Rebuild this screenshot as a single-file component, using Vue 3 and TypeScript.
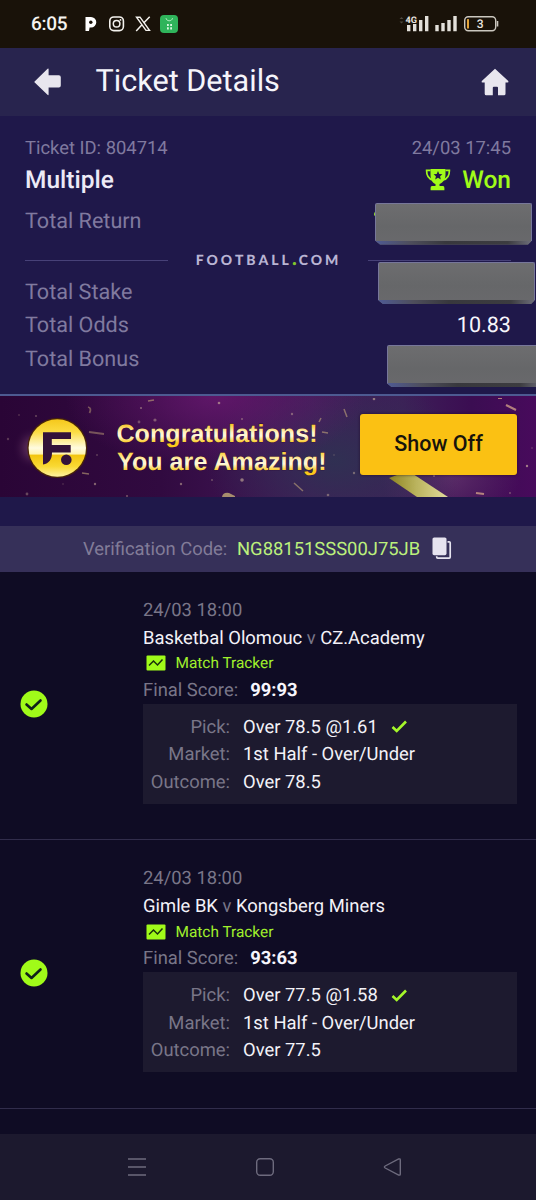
<script setup lang="ts">
interface Match {
  time: string
  home: string
  away: string
  score: string
  pick: string
  market: string
  outcome: string
}

const matches: Match[] = [
  {
    time: '24/03 18:00',
    home: 'Basketbal Olomouc',
    away: 'CZ.Academy',
    score: '99:93',
    pick: 'Over 78.5 @1.61',
    market: '1st Half - Over/Under',
    outcome: 'Over 78.5',
  },
  {
    time: '24/03 18:00',
    home: 'Gimle BK',
    away: 'Kongsberg Miners',
    score: '93:63',
    pick: 'Over 77.5 @1.58',
    market: '1st Half - Over/Under',
    outcome: 'Over 77.5',
  },
]

// x, y, radius, opacity of the small confetti specks
const specks: number[][] = [
  [19, 17, 1, 0.3], [36, 18, 1, 0.5], [141, 10, 1, 0.7], [219, 5, 1.3, 0.8], [242, 21, 1, 0.6],
  [139, 24, 1.4, 0.5], [155, 22, 1.6, 0.6], [8, 41, 1.2, 0.4], [97, 57, 1, 0.4], [95, 86, 1.2, 0.7],
  [181, 86, 1.2, 0.7], [212, 82, 1, 0.5], [242, 82, 1.8, 0.8], [63, 86, 0.8, 0.4], [27, 96, 1.4, 0.5],
  [127, 98, 1, 0.6], [374, 1, 1.3, 0.8], [292, 16, 1.2, 0.6], [354, 75, 1.2, 0.6], [434, 78, 1, 0.6],
  [527, 68, 1.2, 0.9], [510, 95, 1, 0.5], [532, 50, 0.8, 0.5], [328, 97, 1.3, 0.6], [334, 57, 0.8, 0.4],
]
</script>

<template>
  <div class="screen">
    <div class="status">
      <span class="clock">6:05</span>
      <svg class="status-icons" width="110" height="24" viewBox="0 0 110 24">
        <path d="M6.500 5h5.500a5 5 0 0 1 0 10.600h-1.400l-.6 3.400H6.500z" fill="#fff" />
        <circle cx="11.800" cy="10.300" r="1.700" fill="#191209" />
        <rect x="30.800" y="5" width="13.600" height="13.600" rx="4" fill="none" stroke="#f4f2ee" stroke-width="1.600" />
        <circle cx="37.600" cy="11.800" r="3.300" fill="none" stroke="#f4f2ee" stroke-width="1.500" />
        <circle cx="41.500" cy="7.900" r="0.900" fill="#f4f2ee" />
        <path d="M57.500 5.200H61l9.500 13.200H67z" fill="none" stroke="#f4f2ee" stroke-width="1.400" />
        <path d="M70.700 4.700l-6 6.400M63 12.700l-5.800 6.200" stroke="#f4f2ee" stroke-width="1.500" />
        <rect x="81" y="3" width="18" height="18" rx="4" fill="#2fb45b" />
        <path d="M87 6.200c.6 3.400 5.900 3.400 6.500 0" fill="none" stroke="#b9f0c8" stroke-width="1" />
        <path d="M88 13h1.800M91.200 13H93M88 16.300h1.800M91.200 16.300H93" stroke="#d8f7e0" stroke-width="2.200" />
      </svg>
      <svg class="signal" width="102" height="24" viewBox="0 0 102 24">
        <path d="M1.500 7l2-2 2 2zM1.500 9.500l2 2 2-2z" fill="#4b463e" />
        <text x="7.500" y="10.700" class="net" textLength="11.500" lengthAdjust="spacingAndGlyphs">4G</text>
        <path d="M9 13h3.400v6.300H9zM15 12h3.400v7.300H15zM21 8h3.400v11.300H21zM27 4h3.400v15.300H27zM37.300 13h3.400v6.300h-3.400zM43.300 11h3.400v8.300h-3.400zM49.300 8h3.400v11.300h-3.400zM55.300 4h3.400v15.300h-3.400z" fill="#e3e0da" />
        <rect x="66.700" y="4.700" width="31" height="14" rx="3.600" fill="none" stroke="#cbc7bf" stroke-width="1.400" />
        <path d="M99.500 9v5.500" stroke="#cbc7bf" stroke-width="1.600" />
        <rect x="69" y="7" width="2" height="9.500" rx="0.500" fill="#e2a33a" />
        <text x="78.700" y="16" class="charge">3</text>
      </svg>
    </div>

    <header class="header">
      <svg class="back" width="30" height="28" viewBox="0 0 30 28">
        <path d="M1.600 13.500L14.600.8q1-.9 1 .5v6h10.200q2 0 2 2v8.200q0 2-2 2H15.600v6.700q0 1.600-1.100.5L1.700 14.600q-.7-.6-.1-1.100z" fill="#e8e6ee" />
      </svg>
      <h1 class="title">Ticket Details</h1>
      <svg class="home" width="28" height="28" viewBox="0 0 28 28">
        <path d="M14 .8L27.300 13q.7 1.500-.9 1.600h-1.900v11.200q0 1.500-1.500 1.500h-6v-7.500q0-1-1-1h-3.200q-1 0-1 1v7.500H5.200q-1.500 0-1.500-1.500V14.600H1.500Q.1 14.500.8 13z" fill="#e8e6ee" />
      </svg>
    </header>

    <section class="summary">
      <div class="row id-row"><span>Ticket ID: 804714</span><span>24/03 17:45</span></div>
      <div class="row type-row">
        <span class="multi">Multiple</span>
        <span class="won">
          <svg width="26" height="23" viewBox="0 0 26 23">
            <path d="M5.500 1h15v5.500c0 5-2.700 8.300-6 9.600V18h3.500q1.400 0 1.400 2v2.200H5.600V20q0-2 1.400-2h3.500v-1.900c-3.300-1.300-5-4.600-5-9.600z" fill="#a0fb19" />
            <path d="M5.500 2.400H1.600C1.500 7.500 4.300 11 8 12M20.500 2.400h3.900C24.500 7.500 21.700 11 18 12" fill="none" stroke="#a0fb19" stroke-width="1.700" />
            <path d="M13 3l1.300 2.900 3.100.3-2.300 2.100.7 3.200-2.800-1.700-2.800 1.700.7-3.200-2.300-2.100 3.100-.3z" fill="#1f184a" />
          </svg>
          <b>Won</b>
        </span>
      </div>
      <div class="row return-row"><span>Total Return</span><i class="dot"></i><i class="mask mask-return"></i></div>
      <div class="divider"><hr /><span class="brand">FOOTBALL<em>.</em>COM</span><hr /></div>
      <div class="row stake-row"><span>Total Stake</span><i class="mask mask-stake"></i></div>
      <div class="row odds-row"><span>Total Odds</span><span class="odds">10.83</span></div>
      <div class="row bonus-row"><span>Total Bonus</span><i class="mask mask-bonus"></i></div>
    </section>

    <section class="banner">
      <svg class="confetti" width="536" height="99" viewBox="0 0 536 99">
        <defs>
          <linearGradient id="gold" x1="0" y1="0" x2="0" y2="1">
            <stop offset="0" stop-color="#f5c81c" />
            <stop offset="0.220" stop-color="#fbdc42" />
            <stop offset="0.500" stop-color="#fffbe0" />
            <stop offset="0.600" stop-color="#fff4b0" />
            <stop offset="0.630" stop-color="#f3c50f" />
            <stop offset="0.820" stop-color="#f9d934" />
            <stop offset="1" stop-color="#fff3a0" />
          </linearGradient>
          <linearGradient id="ribbon" x1="0" y1="0" x2="1" y2="0">
            <stop offset="0" stop-color="#8f8420" />
            <stop offset="0.450" stop-color="#b9b25c" />
            <stop offset="1" stop-color="#e2dc9c" />
          </linearGradient>
          <linearGradient id="lineOne" gradientUnits="userSpaceOnUse" x1="0" y1="26" x2="0" y2="50">
            <stop offset="0" stop-color="#f8c51e" />
            <stop offset="0.350" stop-color="#fff3c4" />
            <stop offset="0.500" stop-color="#fff8dc" />
            <stop offset="0.780" stop-color="#fbc91b" />
          </linearGradient>
          <linearGradient id="lineTwo" gradientUnits="userSpaceOnUse" x1="0" y1="54" x2="0" y2="78">
            <stop offset="0" stop-color="#fbd135" />
            <stop offset="0.350" stop-color="#fff3c4" />
            <stop offset="0.500" stop-color="#fff8dc" />
            <stop offset="0.780" stop-color="#fbc91b" />
          </linearGradient>
          <filter id="soft" x="-20%" y="-20%" width="140%" height="140%"><feGaussianBlur stdDeviation="0.700" /></filter>
          <filter id="glow" x="-60%" y="-60%" width="220%" height="220%"><feGaussianBlur stdDeviation="5" /></filter>
        </defs>
        <ellipse cx="32" cy="50" rx="10" ry="12" fill="#b77a9a" opacity="0.350" filter="url(#glow)" />
        <circle cx="57.300" cy="50" r="30" fill="#4a2608" />
        <circle cx="57.300" cy="50" r="28.700" fill="url(#gold)" />
        <path d="M43 34.300h28v6.700H51.800v6H70.700v7.500H52c0 7-3 11-9 12z" fill="#33123a" />
        <circle cx="66.300" cy="61.800" r="5.300" fill="#33123a" />
        <g filter="url(#soft)" opacity="0.700">
          <path d="M88 9q4 1 1.500 6M89 34l15 2" stroke="#c0a376" stroke-width="1.800" fill="none" opacity="0.700" />
          <path d="M148 3l6-1M82 75l7 1M322 34l6 1M344 11l3 8M319 24l2-4M294 85l9 8" stroke="#c9ad7c" stroke-width="1.500" opacity="0.800" fill="none" />
          <path d="M506 7l10 5M498 0h4M476 95l8 1" stroke="#e0b08c" stroke-width="2.200" />
          <path d="M222 99q1-5 7-4l6 3v1z" fill="#d7c27b" />
          <circle v-for="(s, i) in specks" :key="i" :cx="s[0]" :cy="s[1]" :r="s[2]" :opacity="s[3]" fill="#d8bfa2" />
        </g>
        <path d="M389 80l16-6h5l38 25h-31z" fill="url(#ribbon)" filter="url(#soft)" />
        <text x="116.500" y="44" class="congrats" fill="url(#lineOne)" textLength="201">Congratulations!</text>
        <text x="117" y="72" class="congrats" fill="url(#lineTwo)" textLength="209.500">You are Amazing!</text>
      </svg>
      <button class="show-off">Show Off</button>
    </section>

    <section class="verify">
      <span class="vlabel">Verification Code:</span>
      <span class="vcode">NG88151SSS00J75JB</span>
      <svg width="20" height="23" viewBox="0 0 20 23">
        <rect x="4.700" y="4.800" width="13.500" height="16.300" rx="1" fill="none" stroke="#e6e3ef" stroke-width="1.700" />
        <rect x="0" y="0" width="15.500" height="19.200" rx="2" fill="#363059" />
        <rect x="0.500" y="0.500" width="14" height="17.700" rx="1.600" fill="#e6e3ef" />
      </svg>
    </section>

    <article v-for="m in matches" :key="m.home" class="match">
      <svg class="badge" width="28" height="28" viewBox="0 0 28 28">
        <circle cx="14" cy="14" r="13.500" fill="#a0fb19" />
        <path d="M6.500 14.500l5 4.500 9-8.500" fill="none" stroke="#10221a" stroke-width="2.600" stroke-linecap="round" stroke-linejoin="round" />
      </svg>
      <div class="body">
        <div class="time">{{ m.time }}</div>
        <div class="teams">{{ m.home }} <span>v</span> {{ m.away }}</div>
        <div class="tracker">
          <svg width="20" height="16" viewBox="0 0 20 16">
            <rect x="0.500" y="0.500" width="19" height="15" rx="1" fill="#a0fb19" />
            <path d="M3 10.500l4.500-4.500 4 4 5-5.500" fill="none" stroke="#19300c" stroke-width="1.500" />
          </svg>
          <span>Match Tracker</span>
        </div>
        <div class="final"><span>Final Score:</span><b>{{ m.score }}</b></div>
        <dl class="bet">
          <dt>Pick:</dt>
          <dd>
            <span>{{ m.pick }}</span>
            <svg width="17" height="14" viewBox="0 0 17 14">
              <path d="M1.500 7l4.200 4L15 1.500" fill="none" stroke="#a5f72a" stroke-width="2.600" />
            </svg>
          </dd>
          <dt>Market:</dt>
          <dd>{{ m.market }}</dd>
          <dt>Outcome:</dt>
          <dd>{{ m.outcome }}</dd>
        </dl>
      </div>
    </article>

    <nav class="nav">
      <svg width="20" height="20" viewBox="0 0 20 20"><path d="M1 2h18M1 10h18M1 18h18" stroke="#6e6b7e" stroke-width="1.400" /></svg>
      <svg width="20" height="20" viewBox="0 0 20 20"><rect x="1.700" y="1.700" width="16.600" height="16.600" rx="3.500" fill="none" stroke="#6e6b7e" stroke-width="1.400" /></svg>
      <svg width="20" height="20" viewBox="0 0 20 20"><path d="M2.200 9L15.700 2q1.600-.6 1.600 1v14q0 1.600-1.600 1L2.200 11q-1.600-1 0-2z" fill="none" stroke="#6e6b7e" stroke-width="1.400" /></svg>
    </nav>
  </div>
</template>

<style>
html,
body {
  margin: 0;
  background: #0f0c24;
}
</style>

<style scoped>
.screen {
  width: 536px;
  height: 1200px;
  overflow: hidden;
  display: flex;
  flex-direction: column;
  background: #0f0c24;
  font-family: Roboto, "Liberation Sans", sans-serif;
  white-space: nowrap;
  text-rendering: geometricPrecision;
}
.screen > * {
  flex: none;
  box-sizing: border-box;
}
svg {
  display: block;
  flex: none;
}
.status {
  height: 47.500px;
  display: flex;
  align-items: center;
  padding-left: 31px;
  background: #191209;
}
.clock {
  width: 48px;
  color: #f6f4f0;
  font-size: 19px;
  font-weight: 500;
  line-height: 48px;
  letter-spacing: -0.300px;
}
.signal {
  margin-left: 209px;
}
.net {
  font: 700 9px Roboto, sans-serif;
  fill: #e9e6e0;
}
.charge {
  font: 500 12px Roboto, sans-serif;
  fill: #e9e6e0;
}
.header {
  height: 68px;
  display: flex;
  align-items: center;
  padding: 0 27px 0 33px;
  background: #28244e;
}
.title {
  margin: 0 0 0 32.500px;
  color: #f6f5fb;
  font-size: 30.600px;
  font-weight: 400;
  line-height: 66px;
  flex: 1;
}
.summary {
  height: 278.500px;
  padding: 15.500px 25px 0;
  background: #1f184a;
  color: #807a9f;
  font-size: 21.600px;
}
.row {
  position: relative;
  display: flex;
  justify-content: space-between;
  align-items: center;
}
.id-row > span,
.return-row > span,
.stake-row > span,
.odds-row > span,
.bonus-row > span {
  padding-top: 2px;
}
.id-row {
  height: 32px;
  font-size: 18.400px;
}
.type-row {
  height: 33px;
}
.multi {
  color: #eceaf6;
  font-size: 24.500px;
  font-weight: 500;
}
.won {
  display: flex;
  align-items: center;
  gap: 11.500px;
  color: #a0fb19;
  font-size: 24.500px;
}
.won b {
  font-weight: 500;
}
.return-row {
  height: 48px;
}
.divider {
  height: 32px;
  display: flex;
  align-items: center;
  justify-content: space-between;
}
.divider hr {
  width: 143px;
  height: 1px;
  margin: 0;
  border: 0;
  background: #474178;
}
.brand {
  padding: 0 0 0 1px;
  color: #b9b4d3;
  font: 900 14px/30px Lato, sans-serif;
  letter-spacing: 3px;
}
.brand em {
  color: #81c62b;
  font-style: normal;
  font-size: 20px;
  line-height: 10px;
  letter-spacing: 2px;
}
.stake-row {
  height: 31px;
}
.odds-row {
  height: 35px;
}
.bonus-row {
  height: 32px;
}
.odds {
  color: #f7f6fc;
}
.dot {
  position: absolute;
  left: 349px;
  top: 16px;
  width: 3px;
  height: 4px;
  border-radius: 2px;
  background: #8fd630;
}
.mask {
  position: absolute;
  box-sizing: border-box;
  width: 157px;
  height: 42px;
  border: 1px solid #77779a;
  border-bottom: 0;
  border-radius: 2px 2px 0 0;
  clip-path: polygon(0 0, 100% 0, 100% 38px, calc(100% - 4px) 100%, 5px 100%, 0 38px);
  background:
    linear-gradient(90deg, #4f5a92, #4e4e5c 22%, #38383d 45%, #3c3c40 85%, #6c6c78) 0 100% / 100% 4px no-repeat,
    linear-gradient(#6d6d6f, #666769 55%, #69696c);
}
.mask-return {
  left: 350px;
  top: 6.500px;
}
.mask-stake {
  left: 353px;
  top: -14px;
}
.mask-bonus {
  left: 361.500px;
  top: 3px;
}
.banner {
  height: 103px;
  border-top: 2px solid #4d5a91;
  padding: 18px 19px 0 0;
  position: relative;
  display: flex;
  justify-content: flex-end;
  background:
    radial-gradient(ellipse 150px 75px at 215px 0, rgba(105, 24, 112, 0.8), transparent),
    radial-gradient(ellipse 130px 90px at 335px 65px, rgba(47, 49, 82, 0.95), transparent),
    radial-gradient(ellipse 70px 50px at 450px 80px, rgba(100, 50, 110, 0.8), transparent),
    linear-gradient(90deg, #2a0536, #310a40 30%, #43195a 58%, #3d2058 75%, #3b0d52 88%, #480a5c);
}
.confetti {
  position: absolute;
  left: 0;
  top: 2px;
}
.congrats {
  font: 700 25px "Liberation Sans", Arial, sans-serif;
  stroke: #2a0c33;
  stroke-width: 0.600px;
  paint-order: stroke;
}
.show-off {
  position: relative;
  width: 157px;
  height: 61px;
  border: 0;
  border-radius: 3px;
  padding: 0 0 2px;
  background: #fbc113;
  color: #17130c;
  font: 500 21.500px/58px Roboto, sans-serif;
  box-shadow: 0 0 3px rgba(30, 5, 30, 0.7);
}
.verify {
  height: 74.500px;
  border-top: 29px solid #1f184a;
  background: #363059;
  display: flex;
  align-items: center;
  padding-left: 83px;
  font-size: 18.400px;
}
.verify span {
  padding-top: 1px;
}
.vlabel {
  width: 154px;
  color: #827c98;
}
.vcode {
  width: 195px;
  color: #bcf07c;
}
.match {
  height: 268.500px;
  border-bottom: 1.500px solid #312d4b;
  padding: 25px 19px 0 20px;
  display: flex;
  align-items: flex-start;
}
.badge {
  margin-top: 93.500px;
}
.body {
  width: 374px;
  margin-left: 95px;
  font-size: 18.400px;
  color: #797688;
}
.time {
  height: 28px;
  line-height: 28px;
}
.teams {
  height: 27.500px;
  line-height: 28px;
  color: #f3f2f8;
}
.teams span {
  color: #797688;
}
.tracker {
  height: 22.500px;
  display: flex;
  align-items: center;
  gap: 9.500px;
  padding-left: 3px;
  color: #a0f02c;
  font-size: 15.400px;
}
.final {
  height: 29px;
  line-height: 31px;
  display: flex;
  gap: 12px;
}
.final b {
  color: #f7f6fc;
  font-weight: 700;
}
.bet {
  margin: 0;
  height: 100px;
  box-sizing: border-box;
  padding: 10px 0 0;
  display: grid;
  grid-template-columns: 87px 1fr;
  grid-auto-rows: 27.500px;
  align-content: start;
  align-items: center;
  column-gap: 13px;
  background: #1d1a2f;
}
.bet dt {
  text-align: right;
}
.bet dd {
  margin: 0;
  display: flex;
  align-items: center;
  gap: 13px;
  color: #f3f2f8;
}
.nav {
  margin-top: auto;
  height: 66px;
  padding: 0 133px 0 127px;
  display: flex;
  align-items: center;
  justify-content: space-between;
  background: #1c192e;
}
</style>
